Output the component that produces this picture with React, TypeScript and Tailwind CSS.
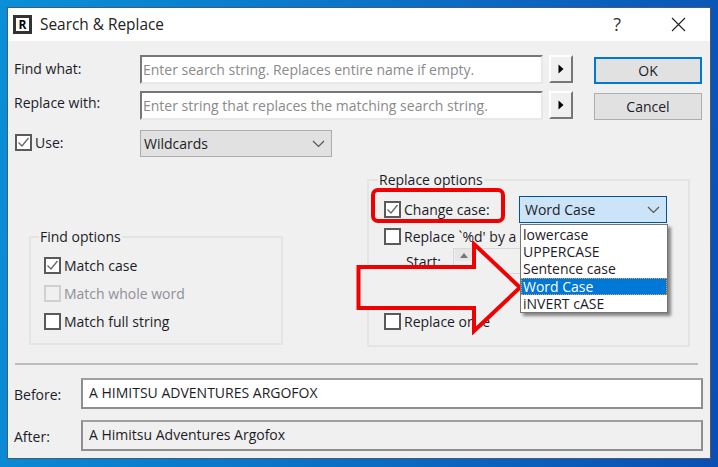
const uiFont = "font-['Open_Sans','Noto_Sans',sans-serif]";

function CheckBox({ checked, disabled }: { checked?: boolean; disabled?: boolean }) {
  return (
    <span
      className={`flex w-[17px] h-[17px] shrink-0 items-center justify-center border-2 ${
        disabled ? "border-[#d0d0d0] bg-[#f0f0f0]" : "border-[#5a5a5a] bg-white"
      }`}
    >
      {checked && (
        <svg width="13" height="13" viewBox="0 0 13 13" fill="none">
          <path d="M1.5 6.5 L5 10 L11.5 2" stroke="#666" strokeWidth="1.3" />
        </svg>
      )}
    </span>
  );
}

function Check({ label, checked, disabled }: { label: string; checked?: boolean; disabled?: boolean }) {
  return (
    <div className={`flex items-center gap-[3px] h-[17px] ${disabled ? "text-[#8f8f98]" : "text-[#1c1c28]"}`}>
      <CheckBox checked={checked} disabled={disabled} />
      <span className="whitespace-nowrap">{label}</span>
    </div>
  );
}

function PlaceholderInput({ text }: { text: string }) {
  return (
    <div className="w-[403px] h-[29px] bg-white border-2 border-r-[#e8e8e8] border-b-[#e8e8e8] border-t-[#777] border-l-[#777] pl-[1px] flex items-center text-[#8a8a8a] whitespace-nowrap overflow-hidden">
      {text}
    </div>
  );
}

function ArrowButton() {
  return (
    <div className="ml-[6px] w-[24px] h-[28px] bg-[#f0f0f0] border-2 border-t-white border-l-white border-r-[#777] border-b-[#777] flex items-center justify-center">
      <svg width="6" height="10" viewBox="0 0 6 10">
        <path d="M0.5 0.5 L5.5 5 L0.5 9.5 Z" fill="#000" />
      </svg>
    </div>
  );
}

function Chevron({ color = "#555" }: { color?: string }) {
  return (
    <svg width="13" height="8" viewBox="0 0 13 8" fill="none">
      <path d="M1 1 L6.5 6.5 L12 1" stroke={color} strokeWidth="1.2" />
    </svg>
  );
}

const caseOptions = ["lowercase", "UPPERCASE", "Sentence case", "Word Case", "iNVERT cASE"];

export default function App() {
  return (
    <div className={`w-[718px] h-[467px] overflow-hidden bg-[linear-gradient(100deg,#0a8fd8_0%,#0a74c8_45%,#0a4fb4_100%)] pt-[7px] pl-[7px] text-[14px] leading-[17px] ${uiFont}`}>
      <div className="relative w-[704px] h-[452px] bg-[#f0f0f0] border border-[#4a5a68] text-[#1c1c28]">
        {/* title bar */}
        <div className="h-[33px] bg-white flex items-center pl-[5px]">
          <span className="w-[19px] h-[19px] border-[3px] border-[#333] bg-white flex items-center justify-center text-[12px] font-bold text-black leading-none">
            R
          </span>
          <span className="ml-[8px] text-[15.4px] text-[#222]">Search &amp; Replace</span>
          <span className="ml-auto mr-[50px] text-[18px] font-medium text-[#333]">?</span>
          <svg className="mr-[24px]" width="15" height="15" viewBox="0 0 15 15" fill="none">
            <path d="M1 1 L14 14 M14 1 L1 14" stroke="#222" strokeWidth="1.1" />
          </svg>
        </div>

        {/* find / replace rows */}
        <div className="flex pl-[6px] pt-[14px]">
          <div className="w-[126px] shrink-0 flex flex-col">
            <div className="h-[29px] flex items-center pb-[3px]">Find what:</div>
            <div className="h-[29px] mt-[7px] flex items-center pb-[6px]">Replace with:</div>
          </div>
          <div className="flex flex-col gap-[7px]">
            <div className="flex">
              <PlaceholderInput text="Enter search string. Replaces entire name if empty." />
              <ArrowButton />
            </div>
            <div className="flex">
              <PlaceholderInput text="Enter string that replaces the matching search string." />
              <ArrowButton />
            </div>
          </div>
          <div className="ml-[21px] pt-[2px] flex flex-col gap-[9px]">
            <div className="w-[108px] h-[27px] bg-[#e1e1e1] border-2 border-[#0078d7] flex items-center justify-center">OK</div>
            <div className="w-[108px] h-[27px] bg-[#e1e1e1] border border-[#adadad] flex items-center justify-center">Cancel</div>
          </div>
        </div>

        {/* use row */}
        <div className="flex items-center pl-[7px] mt-[10px] h-[27px]">
          <div className="w-[125px] shrink-0 pb-[2px]">
            <Check label="Use:" checked />
          </div>
          <div className="w-[192px] h-[27px] bg-[#e1e1e1] border border-[#adadad] pl-[3px] pr-[6px] flex items-center justify-between">
            <span>Wildcards</span>
            <Chevron />
          </div>
        </div>

        {/* option groups */}
        <div className="flex items-end pl-[21px] mt-[14px] h-[176px]">
          <fieldset className="w-[254px] h-[117px] border-2 border-[#e4e4e4] pl-[13px] mb-[2px]">
            <legend className="-ml-[5px] px-[1px] leading-[17px]">Find options</legend>
            <div className="flex flex-col gap-[11px] mt-[12px]">
              <Check label="Match case" checked />
              <Check label="Match whole word" disabled />
              <Check label="Match full string" />
            </div>
          </fieldset>
          <fieldset className="ml-[84px] w-[323px] h-[176px] border-2 border-[#e4e4e4] pl-[15px]">
            <legend className="-ml-[6px] px-[1px] leading-[17px]">Replace options</legend>
            <div className="flex items-center mt-[8px]">
              <div className="w-[135px]">
                <Check label="Change case:" checked />
              </div>
              <div className="w-[148px] h-[27px] bg-[#cce4f7] border border-[#005499] pl-[5px] pr-[6px] flex items-center justify-between">
                <span>Word Case</span>
                <Chevron />
              </div>
            </div>
            <div className="mt-[5px]">
              <Check label="Replace `%d' by a" />
            </div>
            <div className="flex items-center gap-[12px] mt-[3px] pl-[22px]">
              <span>Start:</span>
              <div className="w-[80px] h-[26px] bg-[#f0f0f0] border border-[#d8d8d8] pl-[1px]">
                <div className="w-[18px] h-[12px] bg-[#e6e6e6] flex items-center justify-center">
                  <svg width="8" height="5" viewBox="0 0 8 5">
                    <path d="M0 5 L4 0 L8 5 Z" fill="#777" />
                  </svg>
                </div>
              </div>
            </div>
            <div className="mt-[39px]">
              <Check label="Replace once" />
            </div>
          </fieldset>
        </div>

        {/* separator */}
        <div className="ml-[7px] mr-[12px] mt-[16px] h-[2px] bg-[#bdbdbd]" />

        {/* before / after */}
        <div className="pl-[6px] pt-[13px] flex flex-col gap-[11px]">
          <div className="flex items-center">
            <span className="w-[67px] pt-[2px]">Before:</span>
            <div className="w-[622px] h-[31px] bg-white border-2 border-[#8e8e8e] border-t-[#a0a0a0] pl-[6px] pb-[3px] flex items-center">
              A HIMITSU ADVENTURES ARGOFOX
            </div>
          </div>
          <div className="flex items-center">
            <span className="w-[67px] pt-[2px]">After:</span>
            <div className="w-[622px] h-[31px] bg-[#f0f0f0] border-2 border-[#8e8e8e] border-t-[#a0a0a0] pl-[6px] pb-[3px] flex items-center">
              A Himitsu Adventures Argofox
            </div>
          </div>
        </div>

        {/* annotation: red arrow, covers what lies under it */}
        <svg className="absolute left-[348px] top-[233px]" width="172" height="94" viewBox="0 0 172 94">
          <path
            d="M2.5 26 H118 V3 L164 46.5 L118 90 V67 H2.5 Z"
            fill="#f0f0f0"
            stroke="#f00000"
            strokeWidth="4"
          />
        </svg>

        {/* annotation: red frame round the Change case box */}
        <div className="absolute left-[363px] top-[180px] w-[134px] h-[35px] border-[4px] border-[#f00000] rounded-[7px]" />

        {/* open dropdown */}
        <div className="absolute left-[512px] top-[216px] w-[148px] h-[89px] bg-white border border-[#767676] shadow-[3px_3px_3px_rgba(0,0,0,0.45)] flex flex-col pt-[1px]">
          {caseOptions.map((opt) => (
            <div
              key={opt}
              className={`h-[17.5px] pl-[2px] leading-[17px] whitespace-nowrap ${
                opt === "Word Case" ? "bg-[#0078d7] text-white outline-dotted outline-1 -outline-offset-1 outline-[#e8a040]" : "text-[#1c1c28]"
              }`}
            >
              {opt}
            </div>
          ))}
        </div>
      </div>
    </div>
  );
}
